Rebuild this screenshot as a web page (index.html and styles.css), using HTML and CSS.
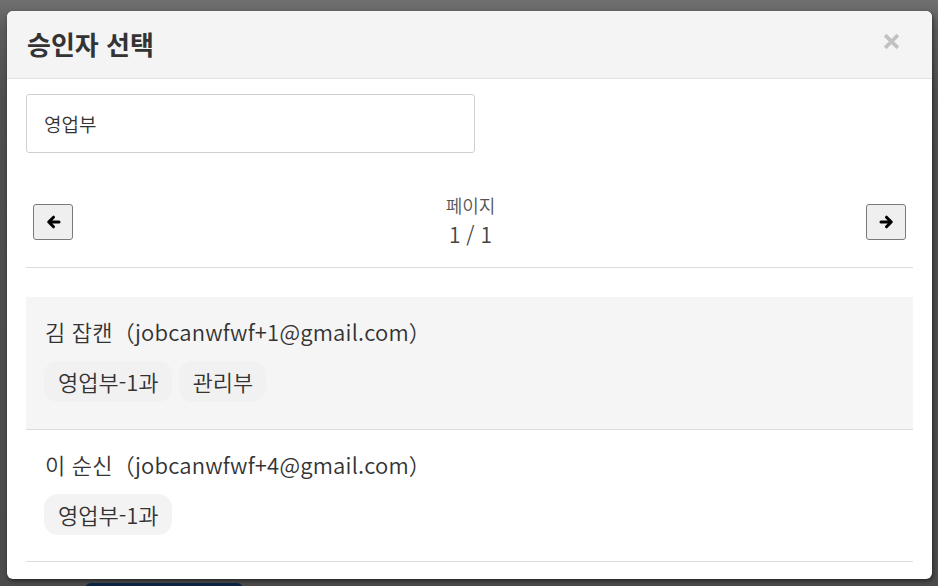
FILE: index.html
```html
<!DOCTYPE html>
<html lang="ko">

<head>
    <meta charset="UTF-8">
    <title>승인자 선택</title>
    <link rel="stylesheet" href="styles.css">
</head>

<body>
    <div class="modal">
        <div class="modal-header">
            <h2 class="modal-title">승인자 선택</h2>
            <button class="close" aria-label="close">
                <svg width="17" height="17" viewBox="0 0 16 16">
                    <path d="M2 2 L14 14 M14 2 L2 14" stroke="#c2c2c2" stroke-width="3.4" stroke-linecap="butt" />
                </svg>
            </button>
        </div>
        <div class="modal-body">
            <input class="search" type="text" value="영업부">

            <div class="pager">
                <button class="page-btn" aria-label="prev">
                    <svg width="15" height="14" viewBox="0 0 14 14">
                        <path d="M12.5 7 H2.5 M7 2.2 L2.2 7 L7 11.8" fill="none" stroke="#000" stroke-width="3" stroke-linecap="round" stroke-linejoin="round" />
                    </svg>
                </button>
                <div class="page-info">
                    <div class="page-label">페이지</div>
                    <div class="page-num">1 / 1</div>
                </div>
                <button class="page-btn" aria-label="next">
                    <svg width="15" height="14" viewBox="0 0 14 14">
                        <path d="M1.5 7 H11.5 M7 2.2 L11.8 7 L7 11.8" fill="none" stroke="#000" stroke-width="3" stroke-linecap="round" stroke-linejoin="round" />
                    </svg>
                </button>
            </div>

            <hr class="divider">

            <ul class="user-list">
                <li class="user active">
                    <div class="user-name">김 잡캔（jobcanwfwf+1@gmail.com）</div>
                    <div class="tags">
                        <span class="tag">영업부-1과</span>
                        <span class="tag">관리부</span>
                    </div>
                </li>
                <li class="user">
                    <div class="user-name">이 순신（jobcanwfwf+4@gmail.com）</div>
                    <div class="tags">
                        <span class="tag">영업부-1과</span>
                    </div>
                </li>
            </ul>
        </div>
    </div>
    <div class="behind-btn"></div>
</body>

</html>
```

FILE: styles.css
```css
* {
    box-sizing: border-box;
    margin: 0;
    padding: 0;
}

body {
    width: 938px;
    height: 586px;
    overflow: hidden;
    background: linear-gradient(#707070 0px, #5a5a5a 30px, #4e4e4e 100px, #4b4b4b 100%);
    font-family: "Noto Sans CJK KR", "Noto Sans", sans-serif;
    font-weight: 350;
    color: #333;
}

.modal {
    margin: 11px 0 0 7px;
    width: 925px;
    height: 568px;
    background: #fff;
    border-radius: 6px;
    overflow: hidden;
    box-shadow: 1px 2px 4px rgba(0, 0, 0, 0.5);
}

.modal-header {
    height: 68px;
    background: #f4f4f4;
    border-bottom: 1px solid #e2e2e2;
    display: flex;
    align-items: center;
    justify-content: space-between;
    padding: 0 32px 0 20px;
}

.modal-title {
    font-size: 26px;
    font-weight: bold;
    color: #333;
    margin-top: -2px;
}

.close {
    background: none;
    border: none;
    width: 17px;
    height: 17px;
    display: flex;
    margin-top: -6px;
}

.modal-body {
    padding: 15px 19px 0 19px;
}

.search {
    display: block;
    width: 449px;
    height: 59px;
    border: 1px solid #cfcfcf;
    border-radius: 3px;
    padding: 0 17px;
    font-family: inherit;
    font-weight: 350;
    font-size: 19px;
    color: #333;
    outline: none;
}

.pager {
    display: flex;
    align-items: center;
    justify-content: space-between;
    padding: 0 7px;
    margin-top: 40px;
}

.page-btn {
    width: 40px;
    height: 36px;
    background: #efefef;
    border: 1px solid #7a7a7a;
    border-radius: 3px;
    display: flex;
    align-items: center;
    justify-content: center;
}

.page-info {
    text-align: center;
    color: #444;
    margin-left: 2px;
}

.page-label {
    font-size: 18px;
    line-height: 24px;
    color: #555;
}

.page-num {
    font-size: 21px;
    line-height: 34px;
}

.divider {
    border: none;
    border-top: 1px solid #dcdcdc;
    margin-top: 16px;
}

.user-list {
    list-style: none;
    margin-top: 29px;
}

.user {
    padding: 19px 19px 26px 19px;
    border-bottom: 1px solid #dddddd;
}

.user.active {
    background: #f5f5f5;
    padding-bottom: 27px;
}

.user-name {
    font-size: 22px;
    line-height: 30px;
    letter-spacing: 0.2px;
    color: #333;
}

.tags {
    display: flex;
    gap: 7px;
    margin-top: 15px;
    margin-left: -1px;
}

.tag {
    background: #f3f3f3;
    border-radius: 14px;
    padding: 0 13px 0 14px;
    height: 41px;
    line-height: 41px;
    font-size: 22px;
    color: #333;
}

.user.active .tag {
    background: #f1f1f1;
}

.behind-btn {
    margin: 4px 0 0 85px;
    width: 158px;
    height: 20px;
    background: #0b2443;
    border-radius: 6px;
}
```
